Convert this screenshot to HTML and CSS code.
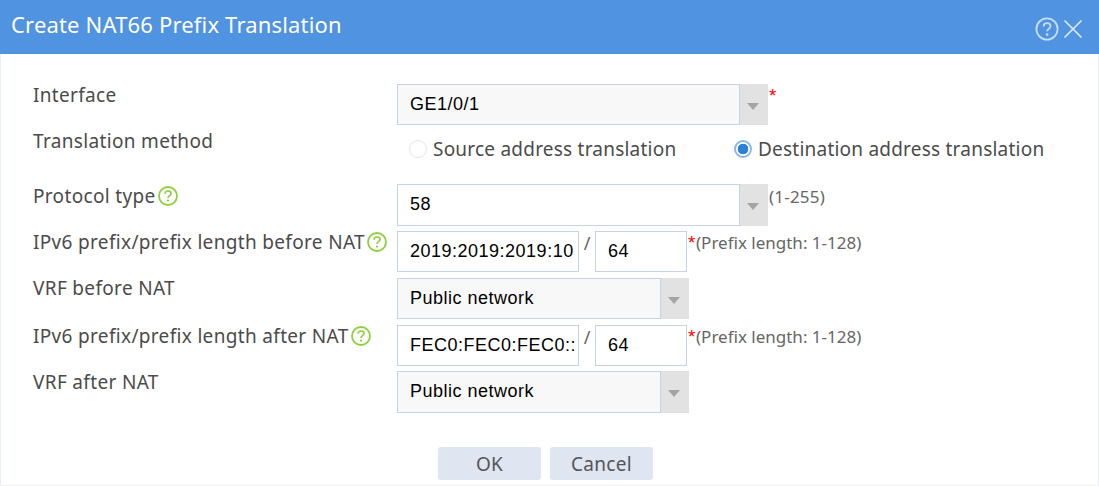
FILE: index.html
```html
<!DOCTYPE html>
<html lang="en">
<head>
<meta charset="utf-8">
<title>Create NAT66 Prefix Translation</title>
<link rel="stylesheet" href="styles.css">
</head>
<body>
<div class="dialog">
  <header class="head">
    <h1 class="title">Create NAT66 Prefix Translation</h1>
    <div class="tools">
      <svg class="tool-help" viewBox="0 0 24 24" width="24" height="24"><circle cx="12" cy="12" r="10.6" fill="none" stroke="#c5dcf5" stroke-width="1.800"/><path d="M8.6 9.400c0-2 1.500-3.300 3.500-3.300s3.400 1.200 3.400 3c0 2.600-3.400 2.600-3.400 5.200" fill="none" stroke="#c5dcf5" stroke-width="1.900"/><circle cx="12.100" cy="17.600" r="1.300" fill="#c5dcf5"/></svg>
      <svg class="tool-close" viewBox="0 0 20 20" width="20" height="20"><path d="M1.500 1.500l17 17M18.500 1.500l-17 17" fill="none" stroke="#dbe9f9" stroke-width="1.700"/></svg>
    </div>
  </header>
  <form class="form">
    <div class="row row-interface">
      <label class="label">Interface</label>
      <div class="combo combo-wide"><input class="field" value="GE1/0/1" readonly><span class="arrow"></span></div>
      <span class="star">*</span>
    </div>
    <div class="row row-method">
      <label class="label label-method">Translation method</label>
      <div class="radios">
        <span class="radio-item radio-source"><span class="radio"></span>Source address translation</span>
        <span class="radio-item"><span class="radio radio-on"></span>Destination address translation</span>
      </div>
    </div>
    <div class="row row-protocol">
      <label class="label label-protocol">Protocol type<svg class="tip" viewBox="0 0 20 20" width="20" height="20"><circle cx="10" cy="10" r="9" fill="none" stroke="#8fcf3c" stroke-width="1.800"/><path d="M7 7.800c0-1.700 1.300-2.800 3-2.800s3 1 3 2.500c0 2.200-3 2.200-3 4.500" fill="none" stroke="#8fcf3c" stroke-width="1.700"/><circle cx="10" cy="14.600" r="1.100" fill="#8fcf3c"/></svg></label>
      <div class="combo combo-wide combo-white"><input class="field" value="58" readonly><span class="arrow"></span></div>
      <span class="hint hint-top">(1-255)</span>
    </div>
    <div class="row">
      <label class="label">IPv6 prefix/prefix length before NAT<svg class="tip" viewBox="0 0 20 20" width="20" height="20"><circle cx="10" cy="10" r="9" fill="none" stroke="#8fcf3c" stroke-width="1.800"/><path d="M7 7.800c0-1.700 1.300-2.800 3-2.800s3 1 3 2.500c0 2.200-3 2.200-3 4.500" fill="none" stroke="#8fcf3c" stroke-width="1.700"/><circle cx="10" cy="14.600" r="1.100" fill="#8fcf3c"/></svg></label>
      <input class="field prefix" value="2019:2019:2019:10" readonly>
      <span class="slash">/</span>
      <input class="field length" value="64" readonly>
      <span class="star">*</span><span class="hint">(Prefix length: 1-128)</span>
    </div>
    <div class="row">
      <label class="label label-vrf">VRF before NAT</label>
      <div class="combo combo-mid"><input class="field" value="Public network" readonly><span class="arrow"></span></div>
    </div>
    <div class="row row-after">
      <label class="label">IPv6 prefix/prefix length after NAT<svg class="tip" viewBox="0 0 20 20" width="20" height="20"><circle cx="10" cy="10" r="9" fill="none" stroke="#8fcf3c" stroke-width="1.800"/><path d="M7 7.800c0-1.700 1.300-2.800 3-2.800s3 1 3 2.500c0 2.200-3 2.200-3 4.500" fill="none" stroke="#8fcf3c" stroke-width="1.700"/><circle cx="10" cy="14.600" r="1.100" fill="#8fcf3c"/></svg></label>
      <input class="field prefix" value="FEC0:FEC0:FEC0::1" readonly>
      <span class="slash">/</span>
      <input class="field length" value="64" readonly>
      <span class="star">*</span><span class="hint">(Prefix length: 1-128)</span>
    </div>
    <div class="row row-last">
      <label class="label">VRF after NAT</label>
      <div class="combo combo-mid"><input class="field" value="Public network" readonly><span class="arrow"></span></div>
    </div>
    <div class="actions">
      <button class="btn" type="button">OK</button>
      <button class="btn" type="button">Cancel</button>
    </div>
  </form>
</div>
</body>
</html>
```
FILE: styles.css
```css
* { box-sizing: border-box; }
html, body { margin: 0; padding: 0; background: #fff; }
body { width: 1099px; height: 486px; overflow: hidden; font-family: "Noto Sans", "Open Sans", sans-serif; color: #4b4b4b; }
.dialog { height: 486px; border-left: 1px solid #e6eefb; border-right: 1px solid #e6eefb; border-bottom: 1px solid #f0f0f0; }
.head { height: 54px; margin: 0 -1px; background: #5093e1; display: flex; align-items: center; justify-content: space-between; padding: 0 15px 0 11px; }
.title { margin: 0 0 6px; font-size: 22px; font-weight: 400; letter-spacing: .17px; color: #fff; }
.tools { display: flex; align-items: center; gap: 4px; padding: 4px 0 0; margin-right: 1px; }
.tool-help, .tool-close { display: block; }
.form { padding: 30px 0 0 32px; }
.row { display: flex; align-items: flex-start; height: 41px; margin-bottom: 6px; }
.row-interface { margin-bottom: 0; }
.row-method { height: 59px; margin-bottom: 0; }
.row-protocol { height: 42px; margin-bottom: 5px; }
.row-after { margin-bottom: 5px; }
.row-last { height: 42px; }
.label { width: 364px; flex: none; display: flex; align-items: center; font-size: 19px; line-height: 22px; color: #4b4b4b; letter-spacing: .33px; white-space: nowrap; }
.label-protocol { margin-top: 1px; }
.label-vrf { margin-top: -1px; }
.label-method { margin-top: 5px; }
.tip { margin-left: 2px; flex: none; }
.field { display: block; width: 100%; height: 100%; min-width: 0; border: 1px solid #c5d3e6; border-radius: 0; outline: none; padding: 0 2px 1px 12px; background: #fff; color: #000; font-family: "Liberation Sans", Arial, sans-serif; font-size: 18px; letter-spacing: .5px; }
.combo { display: flex; height: 100%; }
.combo .field { flex: 1; background: #f8f8f8; }
.combo-white .field { background: #fff; }
.combo-wide { width: 371px; }
.combo-mid { width: 292px; }
.arrow { width: 28px; flex: none; background: #e2e2e2; position: relative; }
.arrow::after { content: ""; position: absolute; left: 7px; top: 19px; border: 6px solid transparent; border-top: 7px solid #a4a4a4; border-bottom: 0; }
.row-interface .combo { height: 41px; }
.row-protocol .combo { height: 42px; }
.prefix { width: 182px; height: 41px; flex: none; }
.length { width: 92px; height: 41px; flex: none; }
.slash { width: 16px; text-align: center; font-family: "Noto Sans", sans-serif; font-size: 18px; line-height: 20px; flex: none; padding-top: 2px; color: #666; }
.star { color: #f00; font-size: 19px; line-height: 24px; font-family: "Liberation Sans", sans-serif; width: 9px; flex: none; padding-left: 1px; }
.hint { font-size: 17px; line-height: 24px; color: #666; white-space: nowrap; }
.hint-top { line-height: 26px; padding-left: 1px; letter-spacing: .2px; }
.radios { display: flex; align-items: center; height: 22px; margin-top: 13px; font-size: 19px; letter-spacing: .22px; color: #4b4b4b; padding-left: 12px; }
.radio-item { display: flex; align-items: center; white-space: nowrap; }
.radio-source { width: 325px; }
.radio { width: 18px; height: 18px; margin-right: 6px; border-radius: 50%; border: 1px solid #e4e4e4; background: #fff; flex: none; }
.radio-on { border: 2px solid #8ab8ec; background: radial-gradient(circle, #2c7fdc 0 5px, #fff 5.6px); }
.actions { display: flex; gap: 9px; padding-left: 405px; margin-top: 34px; }
.btn { width: 103px; height: 33px; border: none; border-radius: 3px; background: #dfe5f1; color: #555; font-family: "Noto Sans", sans-serif; font-size: 19px; letter-spacing: .3px; padding: 0; }
```
